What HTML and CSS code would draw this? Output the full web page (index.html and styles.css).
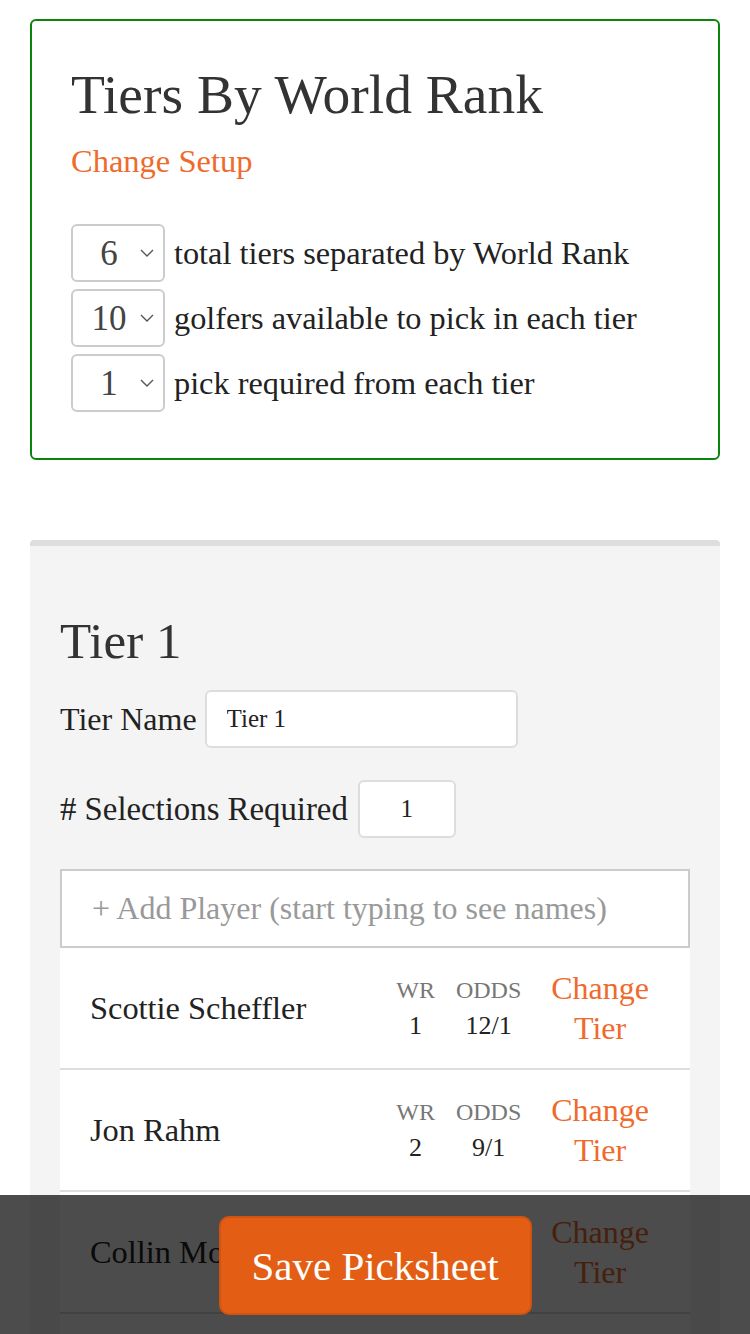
FILE: index.html
```html
<!DOCTYPE html>
<html lang="en">
<head>
<meta charset="utf-8">
<title>Tiers By World Rank</title>
<link rel="stylesheet" href="styles.css">
</head>
<body>
<div class="page">
  <section class="setup-card">
    <h1 class="setup-title">Tiers By World Rank</h1>
    <a class="link setup-link" href="#">Change Setup</a>
    <div class="setup-list">
      <div class="setup-row">
        <span class="select-wrap">
          <select class="select"><option>6</option></select>
          <svg class="chev" width="14" height="8" viewBox="0 0 14 8"><path d="M1 1 L7 7 L13 1" fill="none" stroke="#555" stroke-width="1.4"/></svg>
        </span>
        <span class="setup-label">total tiers separated by World Rank</span>
      </div>
      <div class="setup-row">
        <span class="select-wrap">
          <select class="select"><option>10</option></select>
          <svg class="chev" width="14" height="8" viewBox="0 0 14 8"><path d="M1 1 L7 7 L13 1" fill="none" stroke="#555" stroke-width="1.4"/></svg>
        </span>
        <span class="setup-label">golfers available to pick in each tier</span>
      </div>
      <div class="setup-row">
        <span class="select-wrap">
          <select class="select"><option>1</option></select>
          <svg class="chev" width="14" height="8" viewBox="0 0 14 8"><path d="M1 1 L7 7 L13 1" fill="none" stroke="#555" stroke-width="1.4"/></svg>
        </span>
        <span class="setup-label">pick required from each tier</span>
      </div>
    </div>
  </section>

  <section class="tier">
    <h2 class="tier-title">Tier 1</h2>
    <div class="field-row field-name">
      <label class="field-label">Tier Name</label>
      <input class="text-input name-input" type="text" value="Tier 1">
    </div>
    <div class="field-row field-count">
      <label class="field-label"># Selections Required</label>
      <input class="text-input count-input" type="text" value="1">
    </div>
    <input class="add-player" type="text" placeholder="+ Add Player (start typing to see names)">
    <div class="players">
      <div class="player">
        <span class="player-name">Scottie Scheffler</span>
        <div class="stats">
          <div class="stat"><span class="stat-label">WR</span><span class="stat-value">1</span></div>
          <div class="stat"><span class="stat-label">ODDS</span><span class="stat-value">12/1</span></div>
        </div>
        <a class="link change-tier" href="#">Change<br>Tier</a>
      </div>
      <div class="player">
        <span class="player-name">Jon Rahm</span>
        <div class="stats">
          <div class="stat"><span class="stat-label">WR</span><span class="stat-value">2</span></div>
          <div class="stat"><span class="stat-label">ODDS</span><span class="stat-value">9/1</span></div>
        </div>
        <a class="link change-tier" href="#">Change<br>Tier</a>
      </div>
      <div class="player">
        <span class="player-name">Collin Morikawa</span>
        <div class="stats">
          <div class="stat"><span class="stat-label">WR</span><span class="stat-value">3</span></div>
          <div class="stat"><span class="stat-label">ODDS</span><span class="stat-value">20/1</span></div>
        </div>
        <a class="link change-tier" href="#">Change<br>Tier</a>
      </div>
      <div class="player">
        <span class="player-name">Rory McIlroy</span>
        <div class="stats">
          <div class="stat"><span class="stat-label">WR</span><span class="stat-value">4</span></div>
          <div class="stat"><span class="stat-label">ODDS</span><span class="stat-value">8/1</span></div>
        </div>
        <a class="link change-tier" href="#">Change<br>Tier</a>
      </div>
    </div>
  </section>
</div>

<div class="save-bar">
  <button class="save-btn" type="button">Save Picksheet</button>
</div>
</body>
</html>
```

FILE: styles.css
```css
* { box-sizing: border-box; }

html, body {
  margin: 0;
  padding: 0;
  background: #ffffff;
}

body {
  font-family: "Liberation Serif", "Times New Roman", serif;
  color: #222222;
}

.page {
  padding: 19px 30px 200px;
}

.link {
  color: #ef6a2d;
  text-decoration: none;
}

/* Setup card */
.setup-card {
  border: 2px solid #0a840a;
  border-radius: 6px;
  padding: 44px 39px 46px;
}

.setup-title {
  margin: 0;
  font-size: 55.5px;
  line-height: 60px;
  font-weight: normal;
  color: #333333;
}

.setup-link {
  display: block;
  margin-top: 16px;
  font-size: 32.5px;
  line-height: 40px;
}

.setup-list {
  margin-top: 43px;
  display: flex;
  flex-direction: column;
  gap: 7px;
}

.setup-row {
  display: flex;
  align-items: center;
  gap: 9px;
}

.select-wrap {
  position: relative;
  display: block;
  width: 94px;
  height: 58px;
  flex: none;
}

.select {
  appearance: none;
  -webkit-appearance: none;
  width: 100%;
  height: 100%;
  border: 2px solid #cccccc;
  border-radius: 6px;
  background: #ffffff;
  font-family: "Liberation Serif", serif;
  font-size: 35px;
  color: #444444;
  padding: 0 20px 0 2px;
  text-align: center;
  text-align-last: center;
  margin: 0;
}

.chev {
  position: absolute;
  left: 69px;
  top: 25px;
  pointer-events: none;
}

.setup-label {
  font-size: 32.3px;
  line-height: 40px;
  color: #222222;
}

/* Tier section */
.tier {
  margin-top: 80px;
  border-top: 6px solid #dedede;
  border-radius: 4px 4px 0 0;
  background: #f4f4f4;
  padding: 67px 30px 0;
}

.tier-title {
  margin: 0;
  font-size: 51px;
  line-height: 56px;
  font-weight: normal;
  color: #333333;
}

.field-row {
  display: flex;
  align-items: center;
}

.field-name { margin-top: 21px; gap: 8px; }
.field-count { margin-top: 32px; gap: 10px; }

.field-label {
  font-size: 32px;
  line-height: 40px;
  color: #222222;
}

.field-count .field-label {
  font-size: 32.8px;
}

.text-input {
  height: 58px;
  border: 2px solid #dddddd;
  border-radius: 6px;
  background: #ffffff;
  font-family: "Liberation Serif", serif;
  font-size: 25px;
  color: #222222;
  margin: 0;
}

.name-input {
  width: 313px;
  padding: 0 0 0 20px;
}

.count-input {
  width: 98px;
  padding: 0;
  text-align: center;
}

.add-player {
  display: block;
  width: 100%;
  height: 79px;
  margin: 31px 0 0;
  border: 2px solid #cccccc;
  border-radius: 0;
  background: #ffffff;
  padding: 0 0 0 30px;
  font-family: "Liberation Serif", serif;
  font-size: 32px;
  color: #222222;
}

.add-player::placeholder {
  color: #999999;
  opacity: 1;
}

.players {
  display: flex;
  flex-direction: column;
}

.player {
  display: flex;
  align-items: center;
  height: 122px;
  background: #ffffff;
  border-bottom: 2px solid #dddddd;
  padding: 0 41px 0 30px;
}

.player-name {
  flex: 1;
  font-size: 32.4px;
  line-height: 40px;
  color: #222222;
}

.stats {
  display: flex;
  gap: 21px;
}

.stat {
  display: flex;
  flex-direction: column;
  align-items: center;
}

.stat-label {
  font-size: 24px;
  line-height: 35px;
  color: #777777;
}

.stat-value {
  font-size: 26px;
  line-height: 35px;
  color: #222222;
}

.change-tier {
  margin-left: 30px;
  font-size: 32px;
  line-height: 40px;
  text-align: center;
}

/* Bottom save bar */
.save-bar {
  position: fixed;
  left: 0;
  right: 0;
  bottom: 0;
  height: 139px;
  background: rgba(0, 0, 0, 0.7);
  display: flex;
  justify-content: center;
  padding-top: 21px;
}

.save-btn {
  width: 313px;
  height: 99px;
  border: 2px solid #cf5410;
  border-radius: 10px;
  background: #e35e14;
  color: #ffffff;
  font-family: "Liberation Serif", serif;
  font-size: 41px;
  padding: 0;
  cursor: pointer;
}
```
